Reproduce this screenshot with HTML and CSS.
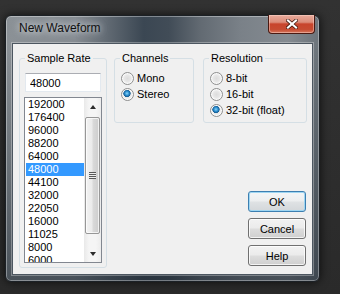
FILE: index.html
```html
<!DOCTYPE html>
<html lang="en">
<head>
    <meta charset="UTF-8">
    <title>New Waveform</title>
    <link rel="stylesheet" href="styles.css">
</head>
<body>
    <div class="window">
        <div class="titlebar">
            <span class="title">New Waveform</span>
            <button class="close-btn" type="button">
                <svg width="12" height="10" viewBox="0 0 12 10">
                    <path d="M2 1.5 L10 8.5 M10 1.5 L2 8.5" stroke="#3b1208" stroke-width="3.6" stroke-linecap="square"/>
                    <path d="M2 1.5 L10 8.5 M10 1.5 L2 8.5" stroke="#ffffff" stroke-width="2.2" stroke-linecap="square"/>
                </svg>
            </button>
        </div>

        <div class="client">
            <fieldset class="group rate-group">
                <legend>Sample Rate</legend>
                <input class="rate-input" type="text" value="48000">
                <div class="listbox">
                    <ul class="items">
                        <li>192000</li>
                        <li>176400</li>
                        <li>96000</li>
                        <li>88200</li>
                        <li>64000</li>
                        <li class="selected">48000</li>
                        <li>44100</li>
                        <li>32000</li>
                        <li>22050</li>
                        <li>16000</li>
                        <li>11025</li>
                        <li>8000</li>
                        <li>6000</li>
                    </ul>
                    <div class="scrollbar">
                        <div class="arrow up"></div>
                        <div class="track">
                            <div class="thumb"><span class="grip"></span></div>
                        </div>
                        <div class="arrow down"></div>
                    </div>
                </div>
            </fieldset>

            <div class="right-col">
                <div class="groups-row">
                    <fieldset class="group channels-group">
                        <legend>Channels</legend>
                        <label class="option"><span class="radio"></span>Mono</label>
                        <label class="option"><span class="radio checked"></span>Stereo</label>
                    </fieldset>
                    <fieldset class="group res-group">
                        <legend>Resolution</legend>
                        <label class="option"><span class="radio"></span>8-bit</label>
                        <label class="option"><span class="radio"></span>16-bit</label>
                        <label class="option"><span class="radio checked"></span>32-bit (float)</label>
                    </fieldset>
                </div>

                <div class="buttons">
                    <button class="btn default" type="button">OK</button>
                    <button class="btn" type="button">Cancel</button>
                    <button class="btn" type="button">Help</button>
                </div>
            </div>
        </div>
    </div>
</body>
</html>
```

FILE: styles.css
```css
body {
    margin: 0;
    height: 294px;
    overflow: hidden;
    background: linear-gradient(to bottom, #323232, #2a2a2a);
    font-family: "Liberation Sans", Arial, sans-serif;
    font-size: 11px;
    color: #000;
}

.window {
    box-sizing: border-box;
    width: 315px;
    height: 267px;
    margin: 15px 0 0 5px;
    padding: 0 6px 6px 6px;
    display: flex;
    flex-direction: column;
    border: 1px solid #1b2025;
    border-radius: 6px;
    background:
        linear-gradient(to bottom, rgba(30, 40, 50, 0) 0, rgba(30, 40, 50, 0) 30px, rgba(30, 40, 50, 0.6) 100%),
        linear-gradient(to right, #8b9196 0%, #868c92 22%, #5f6871 33%, #3b4753 44%, #414c57 52%, #626a72 62%, #7a8188 75%, #858b91 90%, #6c747b 100%);
    box-shadow: inset 0 0 0 1px rgba(255, 255, 255, 0.35), 0 0 10px rgba(0, 0, 0, 0.7);
}

.titlebar {
    height: 27px;
    display: flex;
    justify-content: space-between;
    align-items: flex-start;
}

.title {
    margin: 5px 0 0 7px;
    font-size: 12px;
    line-height: 14px;
    color: #111;
    text-shadow: 0 0 6px rgba(220, 225, 230, 0.9), 0 0 10px rgba(220, 225, 230, 0.8);
}

.close-btn {
    width: 47px;
    height: 19px;
    margin: -1px -2px 0 0;
    padding: 0;
    display: flex;
    align-items: center;
    justify-content: center;
    border: 1px solid #4a1a12;
    border-top: none;
    border-radius: 0 0 4px 4px;
    background: linear-gradient(to bottom, #e8ab9c 0%, #dc8c79 40%, #c8442c 50%, #c64b31 80%, #d6775e 100%);
    box-shadow: inset 0 0 0 1px rgba(255, 220, 210, 0.45);
}

.client {
    flex: 1;
    display: flex;
    align-items: flex-start;
    padding: 8px 0 0 6px;
    background: #f0f0f0;
    border: 1px solid #4c5660;
    box-shadow: 0 0 0 1px rgba(255, 255, 255, 0.3);
}

.group {
    box-sizing: border-box;
    margin: 0;
    min-width: 0;
    padding: 0 4px 4px 5px;
    border: 1px solid #d5dfe5;
    border-radius: 3px;
}

.group legend {
    padding: 0 2px;
    line-height: 13px;
}

.rate-group {
    width: 88px;
    display: flex;
    flex-direction: column;
}

.rate-input {
    box-sizing: border-box;
    width: 76px;
    height: 19px;
    margin: 8px 0 0 0;
    padding: 0 0 0 4px;
    font: inherit;
    border: 1px solid #e3e9ef;
    border-top-color: #abadb3;
    background: #fff;
    outline: none;
}

.listbox {
    box-sizing: border-box;
    width: 78px;
    height: 166px;
    margin: 5px 0 0 -1px;
    display: flex;
    border: 1px solid #828790;
    background: #fff;
    overflow: hidden;
}

.items {
    flex: 1;
    list-style: none;
    margin: 0;
    padding: 0 0 0 1px;
}

.items li {
    height: 13px;
    line-height: 13px;
    padding-left: 2px;
}

.items li.selected {
    background: #3399ff;
    color: #fff;
}

.scrollbar {
    width: 17px;
    display: flex;
    flex-direction: column;
    background: linear-gradient(to right, #e9e9e9, #f5f5f5 30%, #f5f5f5 70%, #ececec);
}

.arrow {
    height: 17px;
    display: flex;
    align-items: center;
    justify-content: center;
}

.arrow::before {
    content: "";
    width: 0;
    height: 0;
    border-left: 3.5px solid transparent;
    border-right: 3.5px solid transparent;
}

.arrow.up::before {
    border-bottom: 4px solid #2b2b2b;
}

.arrow.down::before {
    border-top: 4px solid #2b2b2b;
}

.track {
    flex: 1;
    padding-top: 2px;
}

.thumb {
    box-sizing: border-box;
    width: 15px;
    height: 117px;
    margin-left: 1px;
    display: flex;
    align-items: center;
    justify-content: center;
    border: 1px solid #979797;
    border-radius: 2px;
    background: linear-gradient(to right, #f2f2f2 0%, #ebebeb 45%, #d9d9d9 55%, #cdcdcd 100%);
    box-shadow: inset 0 0 0 1px rgba(255, 255, 255, 0.7);
}

.grip {
    width: 7px;
    height: 7px;
    background: repeating-linear-gradient(to bottom, #5a5a5a 0, #5a5a5a 1px, #eeeeee 1px, #eeeeee 2px);
}

.right-col {
    margin-left: 7px;
    display: flex;
    flex-direction: column;
}

.groups-row {
    display: flex;
    gap: 9px;
}

.channels-group {
    width: 80px;
}

.res-group {
    width: 104px;
}

.option {
    display: flex;
    align-items: center;
    height: 16px;
    padding-left: 1px;
}

.option:first-of-type {
    margin-top: 5px;
}

.radio {
    box-sizing: border-box;
    width: 13px;
    height: 13px;
    margin-right: 3px;
    border: 1px solid #8e8f8f;
    border-radius: 50%;
    background: radial-gradient(circle at 50% 50%, #dcdcdc 0, #e6e6e6 3px, #f6f6f6 5.5px);
    box-shadow: inset 0 0 0 1px rgba(255, 255, 255, 0.6);
}

.radio.checked {
    background:
        radial-gradient(circle at 45% 40%, #8ad8fb 0, #2e8fd0 2px, #135c93 3.4px, rgba(19, 92, 147, 0) 3.9px),
        radial-gradient(circle at 50% 50%, #dcdcdc 0, #e6e6e6 3px, #f6f6f6 5.5px);
}

.buttons {
    align-self: flex-end;
    margin: 68px 1px 0 0;
    display: flex;
    flex-direction: column;
    gap: 6px;
}

.btn {
    box-sizing: border-box;
    width: 58px;
    height: 21px;
    padding: 0;
    font: inherit;
    color: #000;
    border: 1px solid #707070;
    border-radius: 3px;
    background: linear-gradient(to bottom, #f2f2f2 0%, #ebebeb 48%, #dddddd 52%, #cfcfcf 100%);
    box-shadow: inset 0 0 0 1px rgba(255, 255, 255, 0.75);
}

.btn.default {
    border-color: #3c7fb1;
    background: linear-gradient(to bottom, #f4f6f7 0%, #eceeef 48%, #dfe2e4 52%, #d3d7da 100%);
    box-shadow: inset 0 0 0 1px #9fd6f2;
}
```
